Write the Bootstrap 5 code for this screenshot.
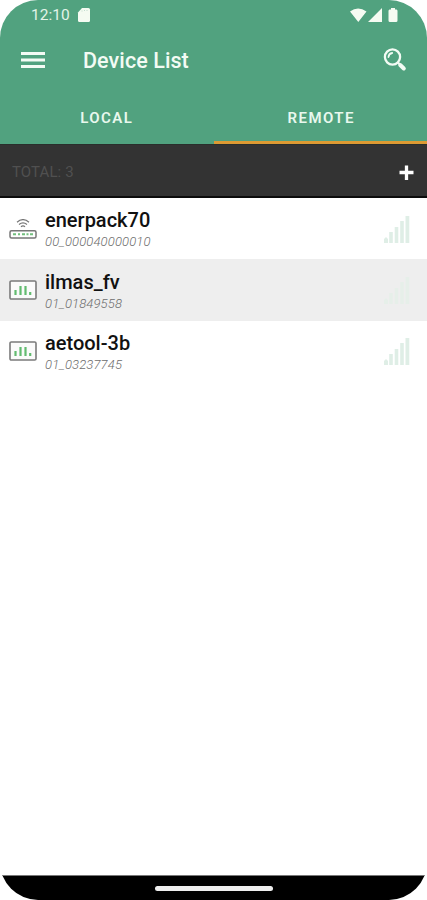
<!DOCTYPE html>
<html lang="en">
<head>
<meta charset="utf-8">
<meta name="viewport" content="width=device-width, initial-scale=1">
<title>Device List</title>
<link href="https://cdn.jsdelivr.net/npm/bootstrap@5.3.0/dist/css/bootstrap.min.css" rel="stylesheet">
<style>
body{font-family:Roboto,"Liberation Sans",sans-serif;background:#fff;line-height:1}
.phone{width:427px;height:900px;border-radius:38px;background:#fff}
.app-head{background:#51a27f;color:#f3fbf4}
.status-row{height:30px;padding-left:31px;padding-right:28px}
.clock{font-size:15.5px;color:#e3f4e8;padding-top:2px}
.card-glyph{margin-left:7px}
.title-row{height:60px;padding-left:21px;padding-right:20px}
.page-title{font-size:21.5px;font-weight:500;margin-left:38px;padding-top:1px;letter-spacing:.08px}
.tab-row{height:54px}
.tab-link{color:#e9f8ee;font-size:15px;font-weight:600;letter-spacing:1.45px;border-bottom:3px solid transparent;padding-top:6px}
.tab-link.active{border-color:#dd9a33;padding-left:2px}
.total-row{height:54px;background:#333;border-top:1px solid #292f2c;border-bottom:2px solid #0c0c0c;padding-left:12px;padding-right:13px;color:#505050;font-size:15px}
.total-text{padding-top:3px;letter-spacing:.1px}
.device{height:61.4px;padding-left:9px;padding-right:17px;color:#111}
.device:nth-child(even){background:#eee}
.device-name{font-size:20px;font-weight:500;line-height:24px;padding-top:1px}
.device-id{font-size:13px;font-style:italic;font-weight:300;color:#6c6c6c;line-height:16px;margin-top:2px;letter-spacing:.15px}
.home-bar{height:25px;background:#000;border-top:1px solid #777}
.home-pill{width:118px;height:5px;background:#eee}
</style>
</head>
<body>
<svg class="d-none">
<symbol id="meter" viewBox="0 0 28 20"><rect x="1" y="1" width="26" height="18" rx="1.3" fill="#fbfbfb" stroke="#7b7b7b" stroke-width="1.6"/><path d="M6.500 10v5M11.500 6v9M16.500 6v9M21.200 12v3" stroke="#62bb70" stroke-width="2.200"/></symbol>
<symbol id="bars" viewBox="0 0 26 28"><path d="M0 24l2-2 2 2v4H0zM5.200 17h3.600v11H5.200zM10.700 12h3.600v16h-3.600zM16.200 6h3.600v22h-3.600zM21.500 1h3.800v27h-3.800z"/></symbol>
</svg>
<div class="phone d-flex flex-column overflow-hidden">
<header class="app-head">
<div class="status-row d-flex align-items-center">
<span class="clock">12:10</span>
<svg class="card-glyph" width="14" height="14" viewBox="0 0 14 14"><path d="M5 0h6.500q1.500 0 1.500 1.500v11q0 1.500-1.500 1.500h-9Q1 14 1 12.500V4.500z" fill="#f5fbf2"/><path d="M4.500 3h1M7 2.500h1M9.500 2.500h1" stroke="#b5d6c5" stroke-width=".8"/></svg>
<svg class="ms-auto" width="49" height="15" viewBox="0 0 49 15" fill="#f5fbf2"><path d="M0 3.500Q8 -2.500 16.500 3.500L8.300 14zM18 14L32 0v14zM39 1.500h2V0h4v1.500h1.500q1 0 1 1.500v9.500q0 1.500-1.500 1.500H40q-1.500 0-1.500-1.500V3q0-1.500 1-1.500z"/></svg>
</div>
<div class="title-row d-flex align-items-center">
<svg width="24" height="18" viewBox="0 0 24 18"><path d="M0 2.500h24M0 9h24M0 15.500h24" stroke="#f3fbf4" stroke-width="2.800"/></svg>
<span class="page-title">Device List</span>
<svg class="ms-auto" width="24" height="24" viewBox="0 0 24 24" fill="none" stroke="#f3fbf4" stroke-linecap="round"><circle cx="9.500" cy="9" r="7.600" stroke-width="2.300"/><path d="M5.500 9Q5.800 5.500 9.200 5" stroke-width="1.800"/><path d="M15 14.500l2 2" stroke-width="2"/><path d="M17.200 17l3.600 3.500" stroke-width="4"/></svg>
</div>
<nav class="tab-row d-flex">
<a class="tab-link w-50 d-flex align-items-center justify-content-center text-decoration-none">LOCAL</a>
<a class="tab-link active w-50 d-flex align-items-center justify-content-center text-decoration-none">REMOTE</a>
</nav>
</header>
<div class="total-row d-flex align-items-center justify-content-between">
<span class="total-text">TOTAL: 3</span>
<svg class="mt-1" width="15" height="16" viewBox="0 0 15 16"><path d="M.5 7.500h14M7.500 .5v14.500" stroke="#fff" stroke-width="3.300"/></svg>
</div>
<main class="flex-grow-1">
<div class="device d-flex align-items-center">
<svg width="28" height="20" viewBox="0 0 28 20" fill="none"><rect x="1" y="11.700" width="26" height="7.300" rx="1.500" stroke="#777" stroke-width="1.500"/><path d="M4 15.300h3M9 15.300h2M13 15.300h3M17.500 15.300h2M21 15.300h3" stroke="#72bf7e" stroke-width="2"/><path d="M8 3.200Q14 -2 20 3.200M10 5.500Q14 2.200 18 5.500M12 7.700q2-1.800 4 0" stroke="#777" stroke-width="1.200"/></svg>
<div class="ms-2"><div class="device-name">enerpack70</div><div class="device-id">00_000040000010</div></div>
<svg class="ms-auto" width="26" height="28" fill="#dfeee6"><use href="#bars"/></svg>
</div>
<div class="device d-flex align-items-center">
<svg width="28" height="20"><use href="#meter"/></svg>
<div class="ms-2"><div class="device-name">ilmas_fv</div><div class="device-id">01_01849558</div></div>
<svg class="ms-auto" width="26" height="28" fill="#e6efe9"><use href="#bars"/></svg>
</div>
<div class="device d-flex align-items-center">
<svg width="28" height="20"><use href="#meter"/></svg>
<div class="ms-2"><div class="device-name">aetool-3b</div><div class="device-id">01_03237745</div></div>
<svg class="ms-auto" width="26" height="28" fill="#dfeee6"><use href="#bars"/></svg>
</div>
</main>
<footer class="home-bar d-flex align-items-center justify-content-center"><div class="home-pill rounded-pill"></div></footer>
</div>
</body>
</html>
